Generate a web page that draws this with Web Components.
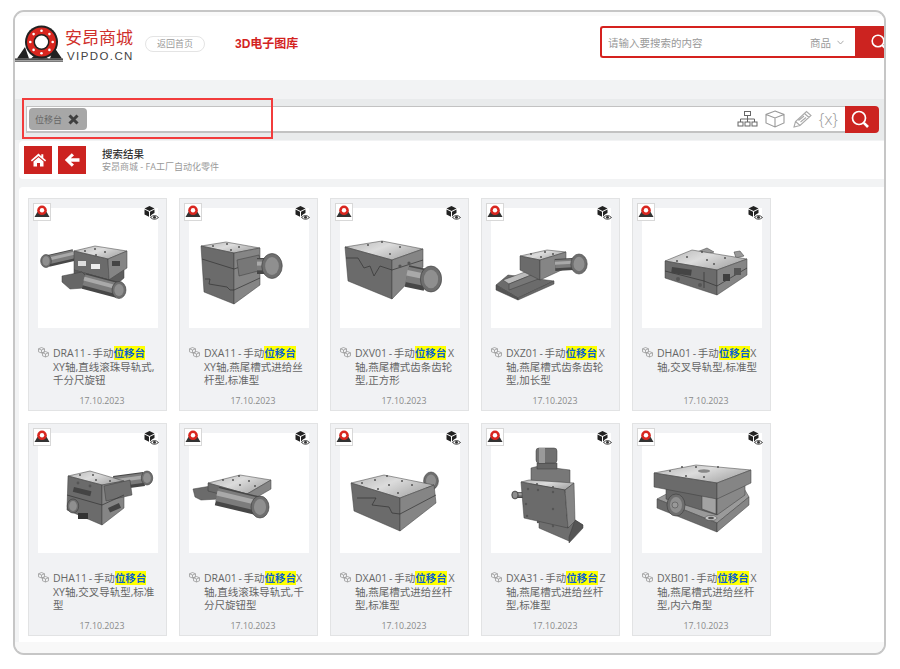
<!DOCTYPE html>
<html lang="zh">
<head>
<meta charset="utf-8">
<title>3D电子图库</title>
<style>
  html, body { margin: 0; background: #fff; }
  body { font-family: "Open Sans", "Noto Sans CJK SC", sans-serif; }
  app-frame { margin: 10px 14px 0 13px; }
</style>
</head>
<body>
<app-frame>
  <site-header></site-header>
  <tag-search></tag-search>
  <result-bar></result-bar>
  <part-grid>
    <part-card model="dra11">DRA11 - 手动<mark>位移台</mark><br>XY轴,直线滚珠导轨式,<br>千分尺旋钮</part-card>
    <part-card model="dxa11">DXA11 - 手动<mark>位移台</mark><br>XY轴,燕尾槽式进给丝<br>杆型,标准型</part-card>
    <part-card model="dxv01">DXV01 - 手动<mark>位移台</mark> X<br>轴,燕尾槽式齿条齿轮<br>型,正方形</part-card>
    <part-card model="dxz01">DXZ01 - 手动<mark>位移台</mark> X<br>轴,燕尾槽式齿条齿轮<br>型,加长型</part-card>
    <part-card model="dha01">DHA01 - 手动<mark>位移台</mark>X<br>轴,交叉导轨型,标准型</part-card>
    <part-card model="dha11">DHA11 - 手动<mark>位移台</mark><br>XY轴,交叉导轨型,标准<br>型</part-card>
    <part-card model="dra01">DRA01 - 手动<mark>位移台</mark>X<br>轴,直线滚珠导轨式,千<br>分尺旋钮型</part-card>
    <part-card model="dxa01">DXA01 - 手动<mark>位移台</mark> X<br>轴,燕尾槽式进给丝杆<br>型,标准型</part-card>
    <part-card model="dxa31">DXA31 - 手动<mark>位移台</mark> Z<br>轴,燕尾槽式进给丝杆<br>型,标准型</part-card>
    <part-card model="dxb01">DXB01 - 手动<mark>位移台</mark> X<br>轴,燕尾槽式进给丝杆<br>型,内六角型</part-card>
  </part-grid>
</app-frame>

<script>
const RED = "#cc2320";

class AppFrame extends HTMLElement {
  constructor() {
    super();
    this.attachShadow({ mode: "open" });
    this.shadowRoot.innerHTML = `
    <style>
      :host {
        display: block;
        width: 873px;
        box-sizing: border-box;
        border: 2px solid #c6c6c6;
        border-radius: 11px;
        background: #f2f3f4;
        overflow: hidden;
      }
      .top { height: 4px; background: #fafafa; }
      .foot { height: 11px; background: #f8f8f8; }
    </style>
    <div class="top"></div>
    <slot></slot>
    <div class="foot"></div>`;
  }
}

class SiteHeader extends HTMLElement {
  constructor() {
    super();
    this.attachShadow({ mode: "open" });
    this.shadowRoot.innerHTML = `
    <style>
      :host { display: flex; height: 64px; background: #fff; margin-bottom: 19px; align-items: flex-start; }
      .logo { display: block; margin-top: 9px; flex: none; }
      .brand { margin: 14px 0 0 1px; width: 70px; flex: none; }
      .brand b { display: block; font: 400 17px/17px "Liberation Sans", "Noto Sans CJK SC", sans-serif; color: #cf2f2c; white-space: nowrap; }
      .brand i { display: block; margin-top: 3px; font: 400 11.5px/12px "Liberation Sans", sans-serif; letter-spacing: 1.4px; color: #444; padding-left: 2px; white-space: nowrap; }
      .pill {
        margin: 20px 0 0 10px; width: 60px; height: 16px; box-sizing: border-box; flex: none;
        border: 1px solid #e4e4e4; border-radius: 8px; font-size: 9px; line-height: 14px; color: #999; text-align: center;
      }
      .title { margin: 21px 0 0 30px; font: 700 12px/14px "Liberation Sans", "Noto Sans CJK SC", sans-serif; color: #d3231f; white-space: nowrap; }
      .search { margin: 10px 0 0 auto; display: flex; height: 32px; width: 284px; flex: none; }
      .field {
        flex: 1; display: flex; align-items: center; box-sizing: border-box;
        border: 2px solid #d5211e; border-right: 0; border-radius: 3px 0 0 3px; padding: 0 11px 0 6px;
        font-size: 10.5px; color: #999;
      }
      .field span:first-child { flex: 1; }
      .field svg { margin-left: 6px; }
      .go { width: 29px; background: ${RED}; overflow: hidden; flex: none; }
      .go svg { display: block; margin: 7px 0 0 15px; }
    </style>
    <svg class="logo" width="49" height="37" viewBox="0 0 49 37">
      <path d="M2 33.500 L10 22 L14 33.500 Z M47 33.500 L39 22 L35 33.500 Z M16 33.500 L24.500 26 L33 33.500 Z" fill="#222"/>
      <rect x="0" y="33.500" width="48" height="1.300" fill="#222"/>
      <rect x="0" y="35.500" width="48" height="1.200" fill="#444"/>
      <circle cx="26.500" cy="17" r="16.500" fill="#222"/>
      <circle cx="26.500" cy="17" r="14.500" fill="#d8261f"/>
      <circle cx="26.500" cy="17" r="8" fill="#222"/>
      <circle cx="26.500" cy="17" r="6.500" fill="#fff"/>
      <g fill="#fff">
        <circle cx="26.500" cy="5.800" r="1.300"/><circle cx="26.500" cy="28.200" r="1.300"/>
        <circle cx="15.300" cy="17" r="1.300"/><circle cx="37.700" cy="17" r="1.300"/>
        <circle cx="18.600" cy="9.100" r="1.300"/><circle cx="34.400" cy="9.100" r="1.300"/>
        <circle cx="18.600" cy="24.900" r="1.300"/><circle cx="34.400" cy="24.900" r="1.300"/>
      </g>
    </svg>
    <div class="brand"><b>安昂商城</b><i>VIPDO.CN</i></div>
    <div class="pill">返回首页</div>
    <div class="title">3D电子图库</div>
    <div class="search">
      <div class="field">
        <span>请输入要搜索的内容</span><span>商品</span>
        <svg width="7" height="5" viewBox="0 0 7 5"><path d="M.5 .8 L3.500 4 L6.500 .8" fill="none" stroke="#aaa"/></svg>
      </div>
      <div class="go">
        <svg width="18" height="18" viewBox="0 0 18 18"><circle cx="8" cy="8" r="5.800" fill="none" stroke="#fff" stroke-width="1.600"/><path d="M12 12 L16 16" stroke="#fff" stroke-width="2.200"/></svg>
      </div>
    </div>`;
  }
}

class TagSearch extends HTMLElement {
  constructor() {
    super();
    this.attachShadow({ mode: "open" });
    this.shadowRoot.innerHTML = `
    <style>
      :host { display: flex; position: relative; height: 41px; box-sizing: border-box; padding: 7px 5px 7px 11px; background: #e9ebec; }
      .input {
        flex: 1; display: flex; align-items: center; background: #fff; box-sizing: border-box;
        border: 1px solid #c2c2c2; border-bottom: 2px solid #c2c2c2; border-right: 0; padding-left: 2px;
      }
      .tag {
        display: flex; align-items: center; width: 58px; height: 22px; box-sizing: border-box; padding-left: 6px;
        background: #a7a7a7; border-radius: 4px; font-size: 9px; color: #666; flex: none;
      }
      .tag svg { margin-left: 6px; }
      .tools { margin-left: auto; display: flex; align-items: center; }
      .tools svg { display: block; }
      .vars { font: 300 16px/18px "Open Sans", sans-serif; color: #999; margin: 0 7px 0 7px; }
      .go { width: 34px; background: ${RED}; border-radius: 0 4px 4px 0; flex: none; }
      .go svg { display: block; margin: 4px 0 0 6px; }
      .mark { position: absolute; left: 7px; top: -1px; width: 251px; height: 41px; box-sizing: border-box; border: 2px solid #f23c3c; }
    </style>
    <div class="input">
      <div class="tag">位移台
        <svg width="11" height="11" viewBox="0 0 11 11"><path d="M1.500 1.500 L9.500 9.500 M9.500 1.500 L1.500 9.500" stroke="#3f3f3f" stroke-width="3"/></svg>
      </div>
      <div class="tools">
        <svg width="21" height="16" viewBox="0 0 21 16" style="margin-right:7px" fill="none" stroke="#666" stroke-width="1">
          <rect x="7.500" y=".5" width="6" height="4"/><path d="M10.500 4.500 V8 M3.500 11 V8 H17.500 V11 M10.500 8 V11"/>
          <rect x="1" y="11" width="5" height="4"/><rect x="8" y="11" width="5" height="4"/><rect x="15" y="11" width="5" height="4"/>
        </svg>
        <svg width="20" height="18" viewBox="0 0 20 18" style="margin-right:8px" fill="none" stroke="#999" stroke-width="1.100">
          <path d="M10 1 L19 4.500 V13 L10 17 L1 13 V4.500 Z M1 4.500 L10 8 L19 4.500 M10 8 V17"/>
        </svg>
        <svg width="19" height="18" viewBox="0 0 19 18" fill="none" stroke="#aaa" stroke-width="1.100">
          <path d="M1 17 L2.500 11.500 L13.500 1.500 L18 5.500 L7 15.500 Z M2.500 11.500 L7 15.500 M11.500 3.500 L16 7.500 M5.500 10.500 L11 6 M7.500 12 L13 7.500"/>
        </svg>
        <span class="vars">{x}</span>
      </div>
    </div>
    <div class="go">
      <svg width="22" height="20" viewBox="0 0 22 20"><circle cx="8" cy="8" r="6.500" fill="none" stroke="#fff" stroke-width="1.700"/><path d="M12.800 12.800 L17 17" stroke="#fff" stroke-width="2.600"/></svg>
    </div>
    <div class="mark"></div>`;
  }
}

class ResultBar extends HTMLElement {
  constructor() {
    super();
    this.attachShadow({ mode: "open" });
    this.shadowRoot.innerHTML = `
    <style>
      :host { display: flex; align-items: center; gap: 6px; height: 38px; box-sizing: border-box; margin: 1px 0 8px 4px; padding: 0 5px; background: #fff; border-radius: 4px 0 0 4px; }
      .btn { width: 28px; height: 28px; background: ${RED}; display: flex; align-items: center; justify-content: center; flex: none; }
      .text { margin-left: 10px; margin-top: 1px; }
      .text b { display: block; font: 500 10.5px/13px "Liberation Sans", "Noto Sans CJK SC", sans-serif; color: #333; }
      .text span { display: block; font-size: 9px; line-height: 12px; color: #999; white-space: nowrap; }
    </style>
    <div class="btn">
      <svg width="17" height="14" viewBox="0 0 16 14" fill="#fff"><path d="M8 .6 L.4 7.300 1.400 8.500 8 2.900 14.600 8.500 15.600 7.300 12.800 4.900 V1.300 H10.800 V3.200 Z"/><path d="M3 8.600 L8 4.300 13 8.600 V13.600 H9.500 V10 H6.500 V13.600 H3 Z"/></svg>
    </div>
    <div class="btn">
      <svg width="16" height="14" viewBox="0 0 16 14" fill="#fff"><path d="M7.800 .3 L.8 7 L7.800 13.700 L10 11.500 L6.800 8.700 H15.500 V5.300 H6.800 L10 2.500 Z"/></svg>
    </div>
    <div class="text"><b>搜索结果</b><span>安昂商城 - FA工厂自动化零件</span></div>`;
  }
}

class PartGrid extends HTMLElement {
  constructor() {
    super();
    this.attachShadow({ mode: "open" });
    this.shadowRoot.innerHTML = `
    <style>
      :host {
        display: grid; grid-template-columns: repeat(5, 139px); grid-auto-rows: 213px; gap: 12px;
        height: 455px; box-sizing: border-box; margin-left: 4px; padding: 11px 9px 6px; background: #fff; border-radius: 4px 0 0 0;
      }
    </style>
    <slot></slot>`;
  }
}

// little drawing helpers for the part renders, all in a 120x120 box
const TOP = "url(#top)", LEFT = "#6b6b6b", RIGHT = "#858585", EDGE = "#3d3d3d";
const poly = (pts, fill) => `<polygon points="${pts}" fill="${fill}" stroke="${EDGE}" stroke-width=".5" stroke-linejoin="round"/>`;
const seam = pts => `<polyline points="${pts}" fill="none" stroke="#333" stroke-width=".7"/>`;
const dots = (list, r = 1) => list.map(([x, y]) => `<circle cx="${x}" cy="${y}" r="${r}" fill="#555"/>`).join("");
const cyl = (x1, y1, x2, y2, r) => `
  <line x1="${x1}" y1="${y1}" x2="${x2}" y2="${y2}" stroke="#474747" stroke-width="${r * 2}"/>
  <line x1="${x1}" y1="${y1 - r * .15}" x2="${x2}" y2="${y2 - r * .15}" stroke="#7c7c7c" stroke-width="${r * 1.4}"/>
  <line x1="${x1}" y1="${y1 - r * .3}" x2="${x2}" y2="${y2 - r * .3}" stroke="#a9a9a9" stroke-width="${r * .5}"/>`;
const cap = (x, y, r) => `<ellipse cx="${x}" cy="${y}" rx="${r * .82}" ry="${r}" fill="#6e6e6e" stroke="${EDGE}" stroke-width=".6"/><ellipse cx="${x}" cy="${y}" rx="${r * .55}" ry="${r * .72}" fill="#8f8f8f"/>`;

const MODELS = {
  dra11:
    cyl(36, 47, 10, 53, 6) + cap(8, 53, 6.500) +
    poly("36,43 57,38 89,43 70,51", TOP) + poly("36,43 70,51 71,72 36,62", LEFT) + poly("70,51 89,43 89,60 71,72", RIGHT) +
    poly("36,62 71,72 86,62 86,70 71,83 36,72", "#5d5d5d") +
    `<rect x="40" y="53" width="8" height="5" fill="#ddd"/><rect x="53" y="56" width="9" height="5" fill="#eee"/><rect x="74" y="53" width="8" height="5" fill="#444"/>` +
    dots([[47, 43], [57, 41], [67, 44], [58, 47]]) +
    poly("24,68 44,64 52,72 46,80 32,81 24,74", "#666") +
    cyl(46, 73, 80, 82, 8) + cap(81, 82, 8.500),
  dxa11:
    poly("12,38 37,34 71,40 45,45", TOP) + poly("12,38 45,45 45,96 15,84", LEFT) + poly("45,45 71,40 71,77 45,96", RIGHT) +
    seam("13,51 45,61 71,52") + seam("16,71 21,71 20,76 38,79 41,82 45,82 71,70") +
    dots([[24, 38], [38, 36], [50, 39], [42, 42]]) +
    poly("48,52 70,47 73,62 50,68", "#777") +
    cyl(68, 58, 80, 58, 8) + cap(83, 58, 12.500),
  dxv01:
    poly("5,39 42,33 83,41 52,52", TOP) + poly("5,39 52,52 52,91 8,73", LEFT) + poly("52,52 83,41 83,59 52,91", RIGHT) +
    seam("6,50 18,50 24,60 30,58 34,68 40,58 52,62 83,52") +
    dots([[28, 37], [42, 34], [50, 46], [60, 39]]) + dots([[60, 58], [69, 55]], 1.600) +
    cyl(67, 68, 86, 72, 11) + cap(91, 71, 13),
  dxz01:
    poly("5,77 17,67 63,73 27,90", LEFT) + poly("5,77 27,90 27,92 5,82", "#555") + poly("27,90 63,73 63,76 27,92", "#6a6a6a") +
    poly("12,72 45,60 50,63 18,76", "#bbb") + poly("18,76 50,63 50,70 18,82", "#777") +
    poly("29,48 56,42 75,44 49,52", TOP) + poly("29,48 49,52 49,72 29,62", LEFT) + poly("49,52 75,44 75,60 49,72", RIGHT) +
    dots([[40, 46], [54, 44], [62, 46], [50, 49]]) +
    cyl(64, 57, 82, 56, 6) + cap(88, 56, 10),
  dha01:
    poly("55,44 65,40 72,44 60,48", "#999") + poly("92,44 98,43 102,48 94,50", "#999") +
    poly("23,53 50,42 105,51 75,62", TOP) + poly("23,53 75,62 75,87 23,70", LEFT) + poly("75,62 105,51 105,67 75,87", RIGHT) +
    seam("23,63 62,73 75,78 105,60") + seam("62,64 62,80") +
    `<rect x="30" y="59" width="20" height="6" fill="#444" transform="rotate(8 30 59)"/>` +
    dots([[45, 49], [65, 52], [60, 44], [83, 50], [72, 56], [35, 53]]) + dots([[36, 71], [58, 77]], 2) +
    `<rect x="81" y="66" width="7" height="7" fill="#3f3f3f"/><rect x="92" y="60" width="7" height="7" fill="#555"/>`,
  dha11:
    cyl(76, 50, 106, 46, 7) + cap(109, 45, 7) +
    poly("30,43 52,38 86,48 64,52", TOP) + poly("30,43 64,52 64,92 29,77", LEFT) + poly("64,52 86,48 86,75 64,92", RIGHT) +
    poly("66,53 92,47 94,62 68,68", "#6f6f6f") +
    seam("29,62 64,72 86,62") +
    `<rect x="36" y="54" width="18" height="5" fill="#444" transform="rotate(14 36 54)"/><rect x="70" y="75" width="12" height="5" fill="#444" transform="rotate(-24 70 75)"/><rect x="40" y="80" width="10" height="6" fill="#333"/>` +
    dots([[42, 42], [55, 42], [58, 47], [72, 48]]) + dots([[40, 50], [52, 53]], 1.400) +
    cap(35, 73, 7),
  dra01:
    poly("4,56 22,53 30,58 30,66 12,67 6,64", "#6b6b6b") +
    poly("19,50 51,42 82,47 58,61", TOP) + poly("19,50 58,61 58,68 19,58", LEFT) + poly("58,61 82,47 82,56 58,70", RIGHT) +
    dots([[34, 47], [44, 47], [51, 52], [60, 48], [66, 53], [50, 43]]) +
    cyl(28, 63, 70, 73, 9.500) + cap(71, 74, 11),
  dxa01:
    cap(91, 48, 9) +
    poly("11,50 44,42 94,52 60,65", TOP) + poly("11,50 60,65 60,98 14,78", LEFT) + poly("60,65 94,52 96,70 60,98", RIGHT) +
    seam("17,65 36,65 32,72 49,74 52,80 60,81 96,62") +
    dots([[22, 50], [35, 47], [47, 43], [49, 52], [62, 48], [72, 52], [38, 56], [58, 60]]),
  dxa31:
    cyl(24, 62, 32, 62, 3) + cap(24, 62, 4) +
    poly("48,95 78,108 92,92 84,87 78,94 48,85", "#6e6e6e") + poly("84,87 92,92 92,95 78,110 78,104", "#555") +
    poly("40,35 48,33 71,36 79,37 79,60 40,55", "#787878") + poly("46,30 66,30 66,36 46,36", "#666") +
    `<rect x="45" y="15" width="21" height="15" rx="3" fill="#707070" stroke="${EDGE}" stroke-width=".5"/><rect x="48" y="15" width="6" height="15" fill="#9a9a9a"/>` +
    poly("30,49 38,47 83,50 74,57", TOP) + poly("30,49 74,57 77,95 33,85", LEFT) + poly("74,57 83,50 84,88 77,95", RIGHT) +
    dots([[46, 51], [62, 54]]) + dots([[37, 56], [47, 57], [62, 59], [35, 71], [62, 76], [36, 83], [47, 89], [62, 93]], 1.200),
  dxb01:
    poly("15,66 30,58 100,52 107,64 75,90", "#9a9a9a") + poly("15,66 75,90 75,99 15,75", LEFT) + poly("75,90 107,64 107,72 75,99", RIGHT) +
    poly("24,50 75,62 75,82 24,66", "#666") + poly("75,62 103,48 103,62 75,82", "#888") +
    poly("60,60 74,62 74,81 60,76", "#a3a3a3") +
    `<ellipse cx="69" cy="85" rx="6" ry="2.500" fill="#c4c4c4" stroke="#444" stroke-width=".5"/><ellipse cx="69" cy="85" rx="3" ry="1.300" fill="#555"/>` +
    poly("12,40 54,32 109,37 75,50", TOP) + poly("12,40 75,50 75,66 12,54", LEFT) + poly("75,50 109,37 109,50 75,66", RIGHT) +
    dots([[28, 38], [40, 34], [54, 34], [76, 34], [62, 44], [44, 43]]) +
    `<ellipse cx="62" cy="38" rx="6" ry="1.800" fill="#888"/>` +
    cap(34, 72, 11) + `<circle cx="33" cy="72" r="3" fill="#999" stroke="#444" stroke-width=".5"/>`
};

class PartModel extends HTMLElement {
  constructor() {
    super();
    this.attachShadow({ mode: "open" });
  }

  connectedCallback() {
    this.shadowRoot.innerHTML = `
    <style>
      :host { display: block; width: 120px; height: 120px; background: #fff; }
      svg { display: block; filter: blur(.35px); }
    </style>
    <svg width="120" height="120" viewBox="0 0 120 120">
      <defs>
        <linearGradient id="top" x1="0" y1="0" x2="1" y2=".6">
          <stop offset="0" stop-color="#b5b5b5"/><stop offset=".5" stop-color="#dcdcdc"/><stop offset="1" stop-color="#a9a9a9"/>
        </linearGradient>
      </defs>
      ${MODELS[this.getAttribute("kind")]}
    </svg>`;
  }
}

class PartCard extends HTMLElement {
  constructor() {
    super();
    this.attachShadow({ mode: "open" });
  }

  connectedCallback() {
    this.shadowRoot.innerHTML = `
    <style>
      :host {
        display: flex; flex-direction: column; position: relative; box-sizing: border-box;
        padding: 9px 9px 3px; border: 1px solid #e2e3e4; background: #f1f2f4; min-width: 0;
      }
      .badge { position: absolute; left: 4px; top: 4px; width: 18px; height: 18px; box-sizing: border-box; border: 1px solid #d8d8d8; background: #fff; }
      .badge svg, .view { display: block; }
      .view { position: absolute; left: 115px; top: 7px; }
      .title { display: flex; gap: 4px; margin-top: 19px; }
      .title svg { flex: none; margin-top: 0; }
      .text { font-size: 10.5px; line-height: 13.5px; color: #666; white-space: nowrap; word-spacing: -1px; }
      ::slotted(mark) { background: #ffff00; color: #0a5fd0; font-weight: 700; }
      .date { margin-top: auto; padding-left: 9px; font-size: 8.8px; line-height: 12px; color: #8a8a8a; text-align: center; }
    </style>
    <part-model kind="${this.getAttribute("model")}"></part-model>
    <div class="badge">
      <svg width="16" height="16" viewBox="0 0 16 16">
        <path d="M.5 13 L4 7 H12 L15.500 13 Z" fill="#333"/>
        <circle cx="8" cy="6.300" r="4.800" fill="#d9261f"/><circle cx="8" cy="6.300" r="2.200" fill="#fff"/>
      </svg>
    </div>
    <svg class="view" width="15" height="15" viewBox="0 0 15 15">
      <path d="M5.500 0 L10.500 2.500 L5.500 5 L.5 2.500 Z" fill="#222"/>
      <path d="M.5 3.500 L5 5.800 V10.800 L.5 8.500 Z" fill="#222"/>
      <path d="M6 5.800 L10.500 3.500 V7 Q7.500 8 6 10.800 Z" fill="#222"/>
      <path d="M6.500 11.500 Q10.500 7.500 14.500 11.500 Q10.500 15 6.500 11.500 Z" fill="#fff" stroke="#333" stroke-width=".9"/>
      <circle cx="10.500" cy="11.300" r="1.400" fill="#333"/>
    </svg>
    <div class="title">
      <svg width="11" height="11" viewBox="0 0 11 11" fill="none" stroke="#9a9a9a" stroke-width=".8">
        <path d="M3.500 .5 L6.500 1.800 V4.800 L3.500 6 L.5 4.800 V1.800 Z M.5 1.800 L3.500 3 L6.500 1.800 M3.500 3 V6"/>
        <path d="M7.500 4.500 L10.500 5.800 V8.800 L7.500 10 L4.500 8.800 V5.800 Z M4.500 5.800 L7.500 7 L10.500 5.800 M7.500 7 V10"/>
      </svg>
      <div class="text"><slot></slot></div>
    </div>
    <div class="date">17.10.2023</div>`;
  }
}

customElements.define("app-frame", AppFrame);
customElements.define("site-header", SiteHeader);
customElements.define("tag-search", TagSearch);
customElements.define("result-bar", ResultBar);
customElements.define("part-grid", PartGrid);
customElements.define("part-model", PartModel);
customElements.define("part-card", PartCard);
</script>
</body>
</html>
